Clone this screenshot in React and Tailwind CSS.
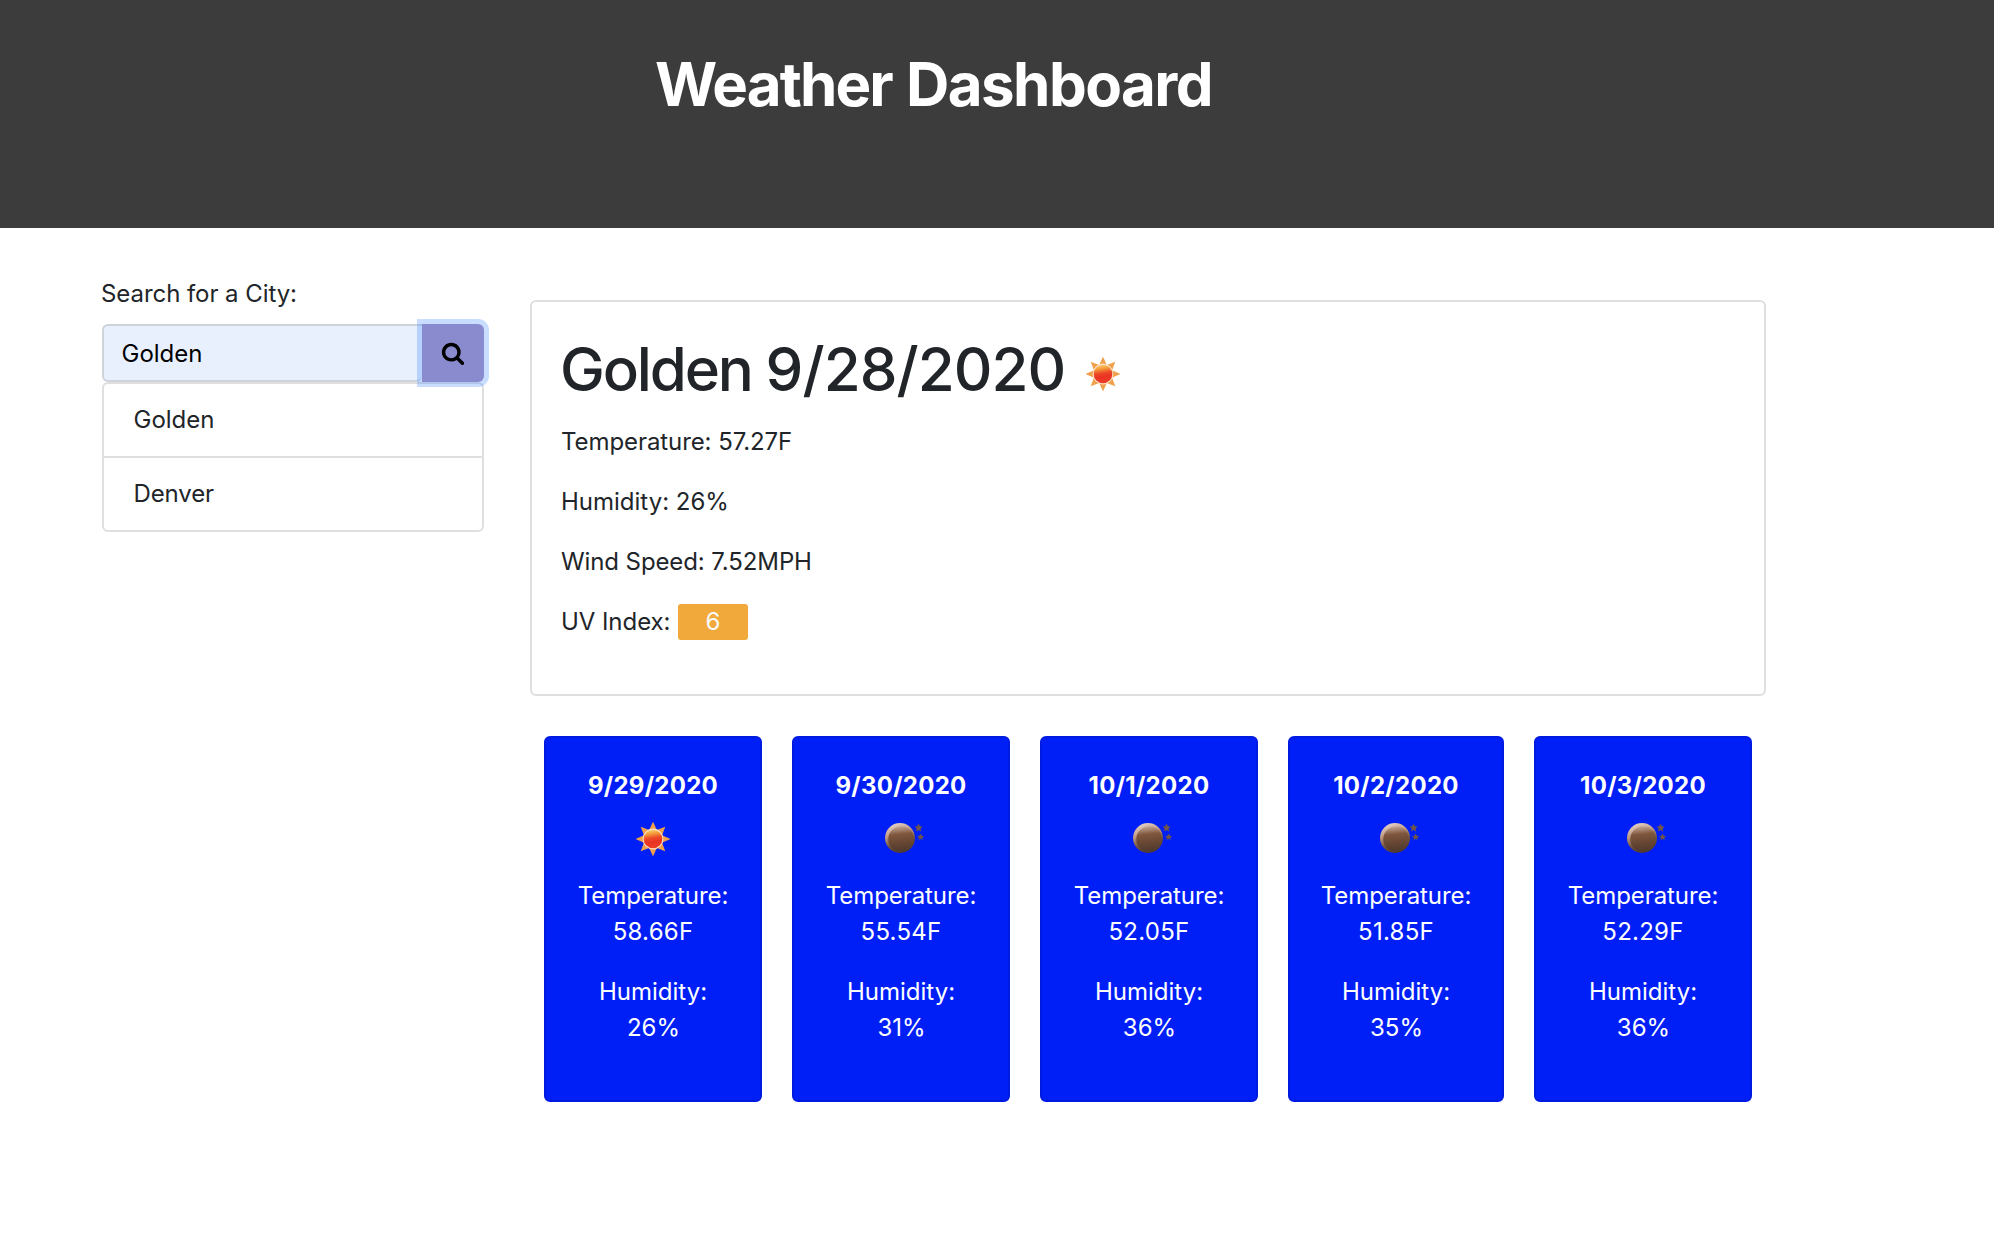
import React from "react";

const forecast = [
  { date: "9/29/2020", icon: "sun", temp: "58.66F", humidity: "26%", width: "w-[218px]" },
  { date: "9/30/2020", icon: "moon", temp: "55.54F", humidity: "31%", width: "w-[218px]" },
  { date: "10/1/2020", icon: "moon", temp: "52.05F", humidity: "36%", width: "w-[218px]" },
  { date: "10/2/2020", icon: "moon", temp: "51.85F", humidity: "35%", width: "w-[216px]" },
  { date: "10/3/2020", icon: "moon", temp: "52.29F", humidity: "36%", width: "w-[218px]" },
];

function SearchIcon() {
  return (
    <svg viewBox="0 0 1792 1792" className="size-6 fill-black">
      <path d="M1216 832q0-185-131.5-316.5T768 384 451.5 515.5 320 832t131.5 316.5T768 1280t316.5-131.5T1216 832zm512 832q0 52-38 90t-90 38q-54 0-90-38l-343-342q-179 124-399 124-143 0-273.5-55.5t-225-150-150-225T64 832t55.5-273.5 150-225 225-150T768 128t273.5 55.5 225 150 150 225T1472 832q0 220-124 399l343 343q37 37 37 90z" />
    </svg>
  );
}

function Sun({ className = "" }) {
  return (
    <svg viewBox="0 0 34 34" className={`size-[34px] shrink-0 ${className}`}>
      <defs>
        <linearGradient id="sunBall" x1="0.4" y1="0" x2="0.55" y2="1">
          <stop offset="0" stopColor="#fbd07a" />
          <stop offset="0.2" stopColor="#f5a03a" />
          <stop offset="0.45" stopColor="#ec4a28" />
          <stop offset="0.65" stopColor="#ea3323" />
          <stop offset="1" stopColor="#ec3f25" />
        </linearGradient>
      </defs>
      {[0, 45, 90, 135, 180, 225, 270, 315].map((a) => (
        <path key={a} d="M17 -0.4 L21.6 9.8 H12.4 Z" fill="#f0a04b" transform={`rotate(${a} 17 17)`} />
      ))}
      <circle cx="17" cy="17" r="10.4" fill="#fde3c8" />
      <circle cx="17" cy="17" r="9.3" fill="url(#sunBall)" />
    </svg>
  );
}

function Moon() {
  const star = "M0 -4 L1.3 -1.5 L4 -1.2 L2 0.8 L2.5 3.6 L0 2.2 L-2.5 3.6 L-2 0.8 L-4 -1.2 L-1.3 -1.5 Z";
  return (
    <svg viewBox="0 0 40 32" className="h-8 w-10 shrink-0">
      <defs>
        <linearGradient id="moonRim" x1="0.25" y1="0" x2="0.6" y2="1">
          <stop offset="0" stopColor="#e6d6cc" />
          <stop offset="0.35" stopColor="#c09a84" />
          <stop offset="0.7" stopColor="#6b4d3a" />
          <stop offset="1" stopColor="#4f3a30" />
        </linearGradient>
        <linearGradient id="moonFace" x1="0.45" y1="0" x2="0.55" y2="1">
          <stop offset="0" stopColor="#c3a797" />
          <stop offset="0.3" stopColor="#80573e" />
          <stop offset="0.6" stopColor="#694834" />
          <stop offset="1" stopColor="#4d392d" />
        </linearGradient>
      </defs>
      <circle cx="16" cy="16" r="15" fill="url(#moonRim)" />
      <circle cx="17.2" cy="17.2" r="12.9" fill="url(#moonFace)" />
      <path d={star} fill="#705548" transform="translate(34.6 5.8)" />
      <path d={star} fill="#705548" transform="translate(36.6 15) scale(0.85)" />
    </svg>
  );
}

function Header() {
  return (
    <header className="flex h-[228px] justify-center bg-[#3c3c3c] pt-12 pr-[127px]">
      <h1 className="text-[60px] leading-[72px] font-bold text-white">
        <span className="tracking-[-1.9px]">Weather</span> <span className="tracking-[-1.55px]">Dashboard</span>
      </h1>
    </header>
  );
}

function Sidebar() {
  return (
    <aside className="w-[382px] pt-12">
      <label className="-ml-px block tracking-[-0.06px]">Search for a City:</label>
      <div className="mt-3 flex h-[58px]">
        <div className="flex flex-1 items-center rounded-l-[6px] rounded-br-[6px] border-2 border-r-0 border-[#ced4da] bg-[#e8f0fe] pt-0.5 pl-[17.5px] text-black">
          Golden
        </div>
        <button className="relative z-10 flex w-[62px] items-center justify-center rounded-r-[6px] bg-[#8a8bce] shadow-[0_0_0_5px_rgba(50,130,255,0.27)]">
          <SearchIcon />
        </button>
      </div>
      <ul className="divide-y-2 divide-[#dfdfdf] rounded-[6px] border-2 border-[#dfdfdf]">
        <li className="h-[74px] pt-[18px] pl-[29.5px]">Golden</li>
        <li className="h-[72px] pt-[18px] pl-[29.5px] tracking-[-0.12px]">Denver</li>
      </ul>
    </aside>
  );
}

function Current() {
  return (
    <section className="h-[396px] rounded-[6px] border-2 border-[#dfdfdf] pt-[31px] pl-[29px]">
      <div className="flex h-[72px]">
        <h2 className="-ml-px w-[505px] text-[60px] leading-[72px] font-medium whitespace-nowrap">
          <span className="tracking-[-2.15px]">Golden </span>
          <span className="tracking-[-0.95px]">9/28/2020</span>
        </h2>
        <Sun className="mt-[23.5px] ml-[21px]" />
      </div>
      <div className="mt-[19px] flex flex-col gap-6">
        <p className="tracking-[-0.08px]">Temperature: 57.27F</p>
        <p>Humidity: 26%</p>
        <p className="tracking-[-0.1px]">Wind Speed: 7.52MPH</p>
        <p className="flex tracking-[-0.06px]">
          UV Index:
          <span className="ml-2 w-[70px] rounded-[3px] bg-[#f2a93b] pr-px text-center text-[#f8f9fa]">6</span>
        </p>
      </div>
    </section>
  );
}

function DayCard({ day }) {
  return (
    <article className={`h-[366px] rounded-[6px] border-2 border-[#001be0] bg-[#001ff7] pt-[30px] text-center text-white ${day.width}`}>
      <h3 className="font-bold tracking-[0.3px]">{day.date}</h3>
      <div className="mt-[17px] flex h-10 justify-center">
        {day.icon === "sun" ? <Sun className="mt-[1px]" /> : <div className="mt-px pl-[6px]"><Moon /></div>}
      </div>
      <p className="mt-[17px] tracking-[-0.08px]">Temperature:</p>
      <p className="tracking-[0.25px]">{day.temp}</p>
      <p className="mt-6">Humidity:</p>
      <p className="pl-px">{day.humidity}</p>
    </article>
  );
}

export default function App() {
  return (
    <div className="min-h-[1246px] w-full bg-white font-['Inter',sans-serif] text-[24px] leading-[36px] text-[#212529]">
      <Header />
      <main className="flex gap-[46px] pl-[102px]">
        <Sidebar />
        <div className="w-[1236px] pt-[72px]">
          <Current />
          <section className="mt-10 flex justify-between px-[14px]">
            {forecast.map((day) => (
              <DayCard key={day.date} day={day} />
            ))}
          </section>
        </div>
      </main>
    </div>
  );
}
